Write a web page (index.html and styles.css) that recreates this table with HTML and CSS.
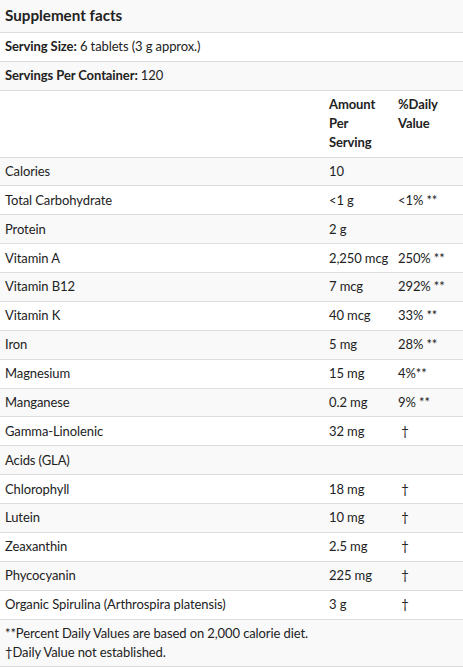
FILE: index.html
```html
<!DOCTYPE html>
<html lang="en">
<head>
<meta charset="utf-8">
<title>Supplement facts</title>
<link rel="stylesheet" href="styles.css">
</head>
<body>
<table class="facts">
  <colgroup>
    <col class="c-name">
    <col class="c-amt">
    <col class="c-dv">
  </colgroup>
  <tbody>
    <tr class="title-row"><th colspan="3" class="title">Supplement facts</th></tr>
    <tr><td colspan="3"><b>Serving Size:</b> 6 tablets (3 g approx.)</td></tr>
    <tr><td colspan="3"><b>Servings Per Container:</b> 120</td></tr>
    <tr class="head-row"><td></td><th>Amount Per Serving</th><th>%Daily Value</th></tr>
    <tr><td>Calories</td><td>10</td><td></td></tr>
    <tr><td>Total Carbohydrate</td><td>&lt;1 g</td><td>&lt;1% **</td></tr>
    <tr><td>Protein</td><td>2 g</td><td></td></tr>
    <tr><td>Vitamin A</td><td>2,250 mcg</td><td>250% **</td></tr>
    <tr><td>Vitamin B12</td><td>7 mcg</td><td>292% **</td></tr>
    <tr><td>Vitamin K</td><td>40 mcg</td><td>33% **</td></tr>
    <tr><td>Iron</td><td>5 mg</td><td>28% **</td></tr>
    <tr><td>Magnesium</td><td>15 mg</td><td>4%**</td></tr>
    <tr><td>Manganese</td><td>0.2 mg</td><td>9% **</td></tr>
    <tr><td>Gamma-Linolenic</td><td>32 mg</td><td>&nbsp;†</td></tr>
    <tr><td>Acids (GLA)</td><td></td><td></td></tr>
    <tr><td>Chlorophyll</td><td>18 mg</td><td>&nbsp;†</td></tr>
    <tr><td>Lutein</td><td>10 mg</td><td>&nbsp;†</td></tr>
    <tr><td>Zeaxanthin</td><td>2.5 mg</td><td>&nbsp;†</td></tr>
    <tr><td>Phycocyanin</td><td>225 mg</td><td>&nbsp;†</td></tr>
    <tr><td>Organic Spirulina (Arthrospira platensis)</td><td>3 g</td><td>&nbsp;†</td></tr>
    <tr><td colspan="3">**Percent Daily Values are based on 2,000 calorie diet.<br>†Daily Value not established.</td></tr>
  </tbody>
</table>
</body>
</html>
```
FILE: styles.css
```css
html, body {
  margin: 0;
  padding: 0;
  background: #ffffff;
}
body {
  font-family: Lato, "Open Sans", sans-serif;
  font-size: 13px;
  letter-spacing: -0.1px;
  color: #222222;
}
.facts {
  width: 463px;
  border-collapse: collapse;
  table-layout: fixed;
}
.c-name { width: 324px; }
.c-amt { width: 69px; }
.c-dv { width: 70px; }
.facts td, .facts th {
  padding: 4.44px 5px;
  line-height: 19px;
  text-align: left;
  vertical-align: middle;
  border-bottom: 1px solid #dddddd;
  font-weight: normal;
  white-space: nowrap;
}
.facts .head-row th {
  white-space: normal;
}
.facts tr:nth-child(odd) {
  background: #f9f9f9;
}
.facts b { font-weight: 700; }
.facts .title {
  font-size: 15.2px;
  font-weight: 700;
  letter-spacing: 0;
  line-height: 23px;
}
.head-row th {
  font-weight: 700;
  vertical-align: top;
}
```
